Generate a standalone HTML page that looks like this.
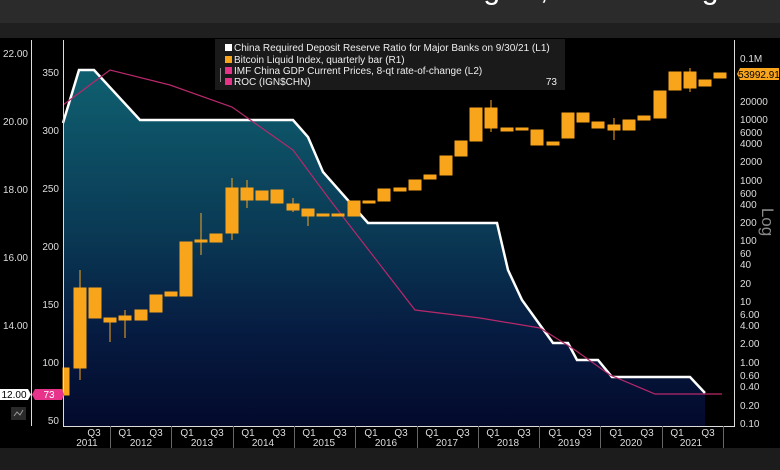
<!DOCTYPE html>
<html><head><meta charset="utf-8"><style>
html,body{margin:0;padding:0;background:#000;width:780px;height:470px;overflow:hidden}
svg{display:block}
text{font-family:"Liberation Sans Narrow","Liberation Sans",sans-serif}
</style></head><body>
<svg width="780" height="470" viewBox="0 0 780 470" xmlns="http://www.w3.org/2000/svg">
<defs>
<linearGradient id="g" x1="0" y1="70" x2="0" y2="426" gradientUnits="userSpaceOnUse">
<stop offset="0" stop-color="#0f6070"/>
<stop offset="0.45" stop-color="#0a3a55"/>
<stop offset="0.75" stop-color="#061a40"/>
<stop offset="1" stop-color="#030a2c"/>
</linearGradient>
</defs>
<rect x="0" y="0" width="780" height="23" fill="#2b2b2b"/>
<text x="430" y="-1" font-size="30" fill="#fff" text-anchor="middle" font-family="Liberation Sans,sans-serif">China Cuts Reserve Ratio Again, Bitcoin Surges</text>
<rect x="0" y="23" width="780" height="15" fill="#1f1f1f"/>
<rect x="0" y="38" width="780" height="410" fill="#000"/>
<rect x="0" y="448" width="780" height="22" fill="#1c1c1c"/>

<path d="M63 123 L79 70 L94 70 L140 120 L293 120 L308 137 L323 172 L368 223 L497 223 L508 270 L522 300 L553 343 L568 343 L577 360 L598 360 L612 377 L690 377 L705 393 L705 426 L63 426 Z" fill="url(#g)"/>
<path d="M63 123 L79 70 L94 70 L140 120 L293 120 L308 137 L323 172 L368 223 L497 223 L508 270 L522 300 L553 343 L568 343 L577 360 L598 360 L612 377 L690 377 L705 393" fill="none" stroke="#fff" stroke-width="2.5"/>
<path d="M63 105 L110 70 L170 85 L232 107 L293 150 L330 200 L415 310 L480 318 L540 328 L575 350 L610 375 L655 394 L722 394" fill="none" stroke="#b8286a" stroke-width="1.2"/>

<g fill="#f8a51c" stroke="#f8a51c" stroke-width="1">
<rect x="63" y="368" width="6" height="27"/>
<line x1="80" y1="270" x2="80" y2="380"/><rect x="74" y="288" width="12" height="80"/>
<rect x="89" y="288" width="12" height="30"/>
<rect x="104" y="318" width="12" height="4"/><line x1="110" y1="318" x2="110" y2="342"/>
<rect x="119" y="316" width="12" height="4"/><line x1="125" y1="310" x2="125" y2="338"/>
<rect x="135" y="310" width="12" height="10"/>
<rect x="150" y="295" width="12" height="17"/>
<rect x="165" y="292" width="12" height="4"/>
<rect x="180" y="242" width="12" height="54"/>
<line x1="201" y1="213" x2="201" y2="255"/><rect x="195" y="240" width="12" height="2"/>
<rect x="210" y="234" width="12" height="8"/>
<line x1="232" y1="178" x2="232" y2="240"/><rect x="226" y="188" width="12" height="45"/>
<line x1="247" y1="180" x2="247" y2="208"/><rect x="241" y="188" width="12" height="12"/>
<rect x="256" y="191" width="12" height="9"/>
<rect x="271" y="190" width="12" height="13"/>
<line x1="293" y1="198" x2="293" y2="212"/><rect x="287" y="204" width="12" height="6"/>
<line x1="308" y1="209" x2="308" y2="226"/><rect x="302" y="209" width="12" height="7"/>
<rect x="317" y="214" width="12" height="2"/>
<rect x="332" y="214" width="12" height="2"/>
<rect x="348" y="201" width="12" height="15"/>
<rect x="363" y="201" width="12" height="2"/>
<rect x="378" y="189" width="12" height="12"/>
<rect x="394" y="188" width="12" height="3"/>
<rect x="409" y="180" width="12" height="10"/>
<rect x="424" y="175" width="12" height="4"/>
<rect x="440" y="156" width="12" height="19"/>
<rect x="455" y="141" width="12" height="15"/>
<rect x="470" y="108" width="12" height="33"/>
<line x1="491" y1="100" x2="491" y2="132"/><rect x="485" y="108" width="12" height="20"/>
<rect x="501" y="128" width="12" height="3"/>
<rect x="516" y="128" width="12" height="2"/>
<rect x="531" y="130" width="12" height="15"/>
<rect x="547" y="142" width="12" height="3"/>
<rect x="562" y="113" width="12" height="25"/>
<rect x="577" y="113" width="12" height="9"/>
<rect x="592" y="122" width="12" height="6"/>
<line x1="614" y1="118" x2="614" y2="140"/><rect x="608" y="125" width="12" height="5"/>
<rect x="623" y="120" width="12" height="10"/>
<rect x="638" y="116" width="12" height="4"/>
<rect x="654" y="91" width="12" height="27"/>
<rect x="669" y="72" width="12" height="18"/>
<line x1="690" y1="68" x2="690" y2="92"/><rect x="684" y="72" width="12" height="16"/>
<rect x="699" y="80" width="12" height="6"/>
<rect x="714" y="73" width="12" height="5"/>
</g>

<g stroke="#ddd" stroke-width="1">
<line x1="31.5" y1="40" x2="31.5" y2="426"/>
<line x1="63.5" y1="40" x2="63.5" y2="426"/>
<line x1="734.5" y1="40" x2="734.5" y2="426"/>
<line x1="63" y1="426.5" x2="735" y2="426.5"/>
</g>
<g fill="#ddd" font-size="10" text-anchor="end">
<text x="28" y="57">22.00</text><text x="28" y="125">20.00</text><text x="28" y="193">18.00</text><text x="28" y="261">16.00</text><text x="28" y="329">14.00</text>
<text x="59" y="76">350</text><text x="59" y="134">300</text><text x="59" y="192">250</text><text x="59" y="250">200</text><text x="59" y="308">150</text><text x="59" y="366">100</text><text x="59" y="424">50</text>
</g>
<g fill="#ddd" font-size="10">
<text x="740" y="62">0.1M</text><text x="740" y="80">40000</text><text x="740" y="105">20000</text><text x="740" y="123">10000</text><text x="740" y="136">6000</text><text x="740" y="147">4000</text><text x="740" y="165">2000</text><text x="740" y="184">1000</text><text x="740" y="197">600</text><text x="740" y="208">400</text><text x="740" y="226">200</text><text x="740" y="244">100</text><text x="740" y="257">60</text><text x="740" y="268">40</text><text x="740" y="287">20</text><text x="740" y="305">10</text><text x="740" y="318">6.00</text><text x="740" y="329">4.00</text><text x="740" y="347">2.00</text><text x="740" y="366">1.00</text><text x="740" y="379">0.60</text><text x="740" y="390">0.40</text><text x="740" y="409">0.20</text><text x="740" y="427">0.10</text>
</g>
<text x="762" y="222" font-size="17" fill="#888" transform="rotate(90 762 222)" text-anchor="middle" font-family="Liberation Sans,sans-serif">Log</text>

<g stroke="#666" stroke-width="1">
<line x1="110.5" y1="426" x2="110.5" y2="448"/><line x1="171.5" y1="426" x2="171.5" y2="448"/><line x1="233.5" y1="426" x2="233.5" y2="448"/><line x1="294.5" y1="426" x2="294.5" y2="448"/><line x1="355.5" y1="426" x2="355.5" y2="448"/><line x1="417.5" y1="426" x2="417.5" y2="448"/><line x1="478.5" y1="426" x2="478.5" y2="448"/><line x1="539.5" y1="426" x2="539.5" y2="448"/><line x1="600.5" y1="426" x2="600.5" y2="448"/><line x1="662.5" y1="426" x2="662.5" y2="448"/><line x1="723.5" y1="426" x2="723.5" y2="448"/>
</g>
<g fill="#ddd" font-size="10" text-anchor="middle">
<text x="94" y="436">Q3</text>
<text x="125" y="436">Q1</text><text x="156" y="436">Q3</text>
<text x="187" y="436">Q1</text><text x="217" y="436">Q3</text>
<text x="248" y="436">Q1</text><text x="279" y="436">Q3</text>
<text x="309" y="436">Q1</text><text x="340" y="436">Q3</text>
<text x="371" y="436">Q1</text><text x="401" y="436">Q3</text>
<text x="432" y="436">Q1</text><text x="463" y="436">Q3</text>
<text x="493" y="436">Q1</text><text x="524" y="436">Q3</text>
<text x="555" y="436">Q1</text><text x="585" y="436">Q3</text>
<text x="616" y="436">Q1</text><text x="647" y="436">Q3</text>
<text x="677" y="436">Q1</text><text x="708" y="436">Q3</text>
<text x="87" y="446">2011</text><text x="141" y="446">2012</text><text x="202" y="446">2013</text><text x="263" y="446">2014</text><text x="324" y="446">2015</text><text x="386" y="446">2016</text><text x="447" y="446">2017</text><text x="508" y="446">2018</text><text x="569" y="446">2019</text><text x="631" y="446">2020</text><text x="691" y="446">2021</text>
</g>

<rect x="215" y="39" width="350" height="51" fill="#1a1a1a"/>
<g font-size="10" fill="#eee">
<rect x="225" y="44" width="7" height="7" fill="#fff"/><text x="234" y="51">China Required Deposit Reserve Ratio for Major Banks on 9/30/21 (L1)</text>
<rect x="225" y="56" width="7" height="7" fill="#f8a51c"/><text x="234" y="63">Bitcoin Liquid Index, quarterly bar (R1)</text>
<rect x="225" y="67" width="7" height="7" fill="#e8338a"/><text x="234" y="74">IMF China GDP Current Prices, 8-qt rate-of-change (L2)</text>
<rect x="225" y="78" width="7" height="7" fill="#e8338a"/><text x="234" y="85">ROC (IGN$CHN)</text>
<text x="557" y="85" text-anchor="end">73</text>
</g>
<line x1="220.5" y1="68" x2="220.5" y2="82" stroke="#888"/>

<path d="M0 389 H28 L31 394.5 L28 400 H0 Z" fill="#fff"/>
<text x="14" y="398" font-size="10" fill="#000" text-anchor="middle">12.00</text>
<path d="M32 394.5 L35 389 H62 L64 394.5 L62 400 H35 Z" fill="#e8338a"/>
<text x="49" y="398" font-size="10" fill="#fff" text-anchor="middle">73</text>
<rect x="11" y="407" width="15" height="13" fill="#2a2a2a"/>
<path d="M14 416 L17 412 L20 415 L23 410" stroke="#999" fill="none"/>
<path d="M737 74 L740 68 H779 V80 H740 Z" fill="#f8a51c"/>
<text x="759" y="78" font-size="10" fill="#000" text-anchor="middle">53992.91</text>
</svg>
</body></html>
